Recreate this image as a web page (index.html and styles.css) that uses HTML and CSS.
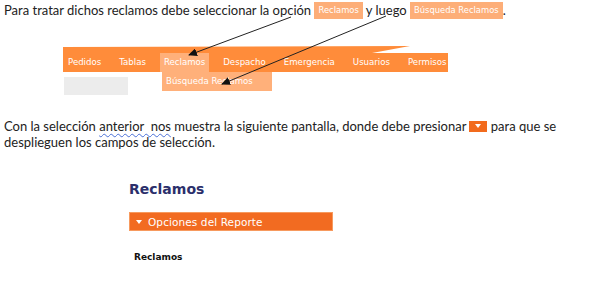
FILE: index.html
```html
<!DOCTYPE html>
<html lang="es">
<head>
    <meta charset="UTF-8">
    <title>Reclamos</title>
    <link rel="stylesheet" href="styles.css">
</head>
<body>
    <div class="doc">
        <p class="line-one">Para tratar dichos reclamos debe seleccionar la opción <span class="chip">Reclamos</span> y luego <span class="chip">Búsqueda Reclamos</span>.</p>

        <div class="menu-wrap">
            <div class="menu-top"></div>
            <ul class="menu">
                <li>Pedidos</li>
                <li>Tablas</li>
                <li class="active">Reclamos</li>
                <li>Despacho</li>
                <li>Emergencia</li>
                <li>Usuarios</li>
                <li>Permisos</li>
            </ul>
            <div class="menu-under">
                <div class="grey-box"></div>
                <div class="submenu">Búsqueda Reclamos</div>
            </div>
        </div>

        <p class="line-two">Con la selección <span class="spell">anterior  nos</span> muestra la siguiente pantalla, donde debe presionar <span class="toggle-icon"></span> para que se<br>desplieguen los campos de selección.</p>

        <div class="panel">
            <h2>Reclamos</h2>
            <div class="panel-bar"><span class="tri"></span>Opciones del Reporte</div>
            <div class="panel-label">Reclamos</div>
        </div>

        <!-- flechas de la captura -->
        <svg class="arrows" width="600" height="295" viewBox="0 0 600 295">
            <defs>
                <marker id="head" markerWidth="9" markerHeight="8" refX="8" refY="4" orient="auto" markerUnits="userSpaceOnUse">
                    <path d="M0,0 L9,4 L0,8 Z" fill="#111"/>
                </marker>
            </defs>
            <line x1="291" y1="17" x2="189" y2="55" stroke="#222" stroke-width="1" marker-end="url(#head)"/>
            <line x1="386" y1="16" x2="222" y2="84" stroke="#222" stroke-width="1" marker-end="url(#head)"/>
        </svg>
    </div>
</body>
</html>
```

FILE: styles.css
```css
body {
    margin: 0;
    font-family: Lato, "Liberation Sans", sans-serif;
    font-size: 13px;
    color: #222;
    background: #fff;
}
.doc {
    position: relative;
    padding: 2px 4px;
}
p {
    margin: 0;
}
.line-one {
    line-height: 17px;
}
.chip {
    display: inline-block;
    background: #fdae78;
    color: #fff;
    font-family: "DejaVu Sans", sans-serif;
    font-size: 8.4px;
    padding: 0 4px;
    line-height: 17px;
    vertical-align: 2px;
}
.menu-wrap {
    margin: 27px 0 0 59px;
    width: 385px;
}
.menu-top {
    width: 347px;
    height: 7px;
    background: #ff8c3a;
    clip-path: polygon(0 1px, 100% 0, 309px 100%, 0 100%);
}
.menu {
    display: flex;
    gap: 10px;
    list-style: none;
    margin: 0;
    padding: 0 0 0 1px;
    height: 19px;
    background: #ff8c3a;
}
.menu li {
    padding: 0 4px;
    color: #fff;
    font-family: "DejaVu Sans", sans-serif;
    font-size: 8.6px;
    line-height: 19px;
}
.menu li.active {
    background: #ffb07a;
}
.menu-under {
    display: flex;
    align-items: flex-start;
}
.grey-box {
    width: 64px;
    height: 18px;
    margin: 5px 0 0 1px;
    background: #ececec;
}
.submenu {
    margin-left: 34px;
    width: 110px;
    padding-left: 4px;
    box-sizing: border-box;
    background: #ffb07a;
    color: #fff;
    font-family: "DejaVu Sans", sans-serif;
    font-size: 8.6px;
    line-height: 19px;
}
.line-two {
    margin-top: 23px;
    line-height: 16px;
}
.spell {
    white-space: pre;
    text-decoration: underline wavy #4a6fd6;
    text-decoration-thickness: 1px;
    text-underline-offset: 2px;
}
.toggle-icon {
    display: inline-block;
    position: relative;
    width: 18px;
    height: 11px;
    background: #f26b1d;
    vertical-align: -1px;
}
.toggle-icon::after {
    content: '';
    position: absolute;
    left: 6px;
    top: 3px;
    border-left: 3.5px solid transparent;
    border-right: 3.5px solid transparent;
    border-top: 4px solid #fff;
}
.panel {
    margin: 30px 0 0 125px;
    width: 204px;
}
.panel h2 {
    margin: 0 0 14px;
    color: #2b2f6b;
    font-family: "DejaVu Sans", sans-serif;
    font-size: 14px;
    line-height: 18px;
}
.panel-bar {
    display: flex;
    align-items: center;
    gap: 6px;
    height: 17px;
    padding-left: 6px;
    background: #f26b21;
    border: 1px solid #f79a5e;
    color: #fff;
    font-family: "DejaVu Sans", sans-serif;
    font-size: 10.5px;
    letter-spacing: 0.1px;
}
.panel-bar .tri {
    border-left: 3.5px solid transparent;
    border-right: 3.5px solid transparent;
    border-top: 4px solid #fff;
}
.panel-label {
    margin: 21px 0 0 5px;
    font-family: "DejaVu Sans", sans-serif;
    font-size: 9px;
    font-weight: bold;
    color: #111;
}
.arrows {
    position: absolute;
    left: 0;
    top: 0;
    pointer-events: none;
}
```
